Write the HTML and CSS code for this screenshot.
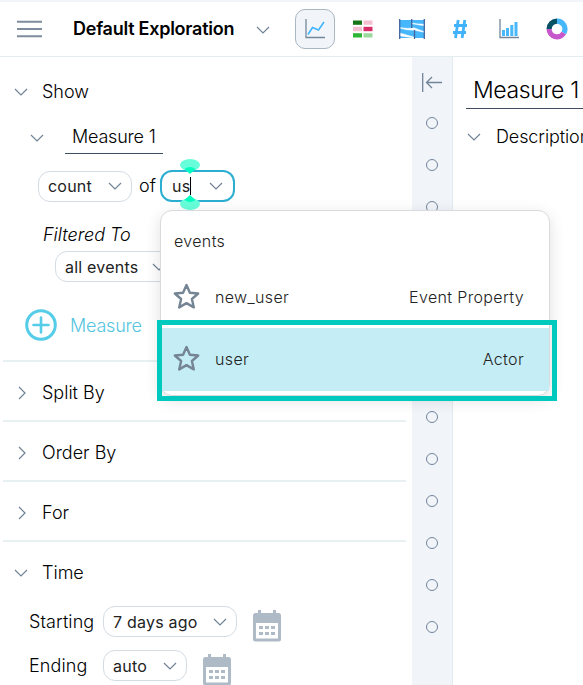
FILE: index.html
```html
<!DOCTYPE html>
<html lang="en">
<head>
<meta charset="utf-8">
<title>Default Exploration</title>
<link rel="stylesheet" href="styles.css">
</head>
<body>
<svg class="defs" aria-hidden="true">
  <symbol id="down" viewBox="0 0 14 8"><path d="M1 1l6 6 6-6" fill="none" stroke="currentColor" stroke-width="1.2"/></symbol>
  <symbol id="right" viewBox="0 0 8 14"><path d="M1 1l6 6-6 6" fill="none" stroke="currentColor" stroke-width="1.2"/></symbol>
  <symbol id="star" viewBox="0 0 28 28"><path d="M13.500 2l3.400 7.700 8.300.8-6.300 5.500 1.900 8.400-7.300-4.300-7.300 4.300 1.900-8.400-6.300-5.500 8.300-.8z" fill="none" stroke="#758594" stroke-width="2.4" stroke-linejoin="round"/></symbol>
  <symbol id="calendar" viewBox="0 0 28 32"><path d="M5 0h3v4H5zM20 0h3v4h-3z" fill="#aebbc7"/><rect y="3" width="28" height="28.500" rx="2.5" fill="#aebbc7"/><path d="M3 13h22v15.500H3z" fill="#fff"/><path d="M6 16h4v3H6zM12 16h4v3h-4zM18 16h4v3h-4zM6 22h4v3H6zM12 22h4v3h-4zM18 22h4v3h-4z" fill="#aebbc7"/></symbol>
</svg>
<header class="topbar">
  <svg class="burger" viewBox="0 0 26 18"><path d="M0 1.5h26M0 9h26M0 16.5h26" stroke="#7d8d9d" stroke-width="2"/></svg>
  <h1 class="title">Default Exploration</h1>
  <svg class="down title-down"><use href="#down"/></svg>
  <nav class="views">
    <span class="view active"><svg width="20" height="20" viewBox="0 0 20 20"><path d="M1 0v18.5h19" fill="none" stroke="#75869a" stroke-width="1.3"/><path d="M3 15.500l4.500-7 6 2.500 5.500-8" fill="none" stroke="#42b4fa" stroke-width="1.600"/></svg></span>
    <span class="view"><svg width="20" height="18" viewBox="0 0 20 18"><path d="M0 .5h9v4.300H0z" fill="#157517"/><path d="M10.500 .5h9v4.300h-9zM0 6.800h9v4.400H0z" fill="#f4c0d1"/><path d="M10.500 6.800h9v4.400h-9z" fill="#d82d68"/><path d="M0 13.200h9v4.300H0z" fill="#2eb536"/><path d="M10.500 13.200h9v4.300h-9z" fill="#9bd99f"/></svg></span>
    <span class="view"><svg width="26" height="20" viewBox="0 0 26 20"><path d="M1 1h24v18H1z" fill="#46b7fb"/><path d="M1 8.500Q8 10 15 8.800L25 12.500v.8L15 11.200Q8 11.500 1 9.300zM13 4l5 .8 7 .4v1.600L13 4.800zM1 14l14 4v1L1 17z" fill="#fff" stroke="#fff" stroke-width=".4"/><path d="M.7 0v20M25.300 0v20M12.700 0v9M15.500 11v9" stroke="#41649d" stroke-width="1.300"/></svg></span>
    <span class="view"><svg width="16" height="20" viewBox="0 0 16 20"><path d="M6.200 1L3.500 19M12.800 1l-2.700 18M2 6.500h13M1 13.500h13" stroke="#42b3fb" stroke-width="2.800" fill="none"/></svg></span>
    <span class="view"><svg width="20" height="20" viewBox="0 0 20 20"><path d="M1 0v18.500h19" fill="none" stroke="#75869a" stroke-width="1.300"/><path d="M3 11h3v6H3zM7 9h3v8H7zM11.300 6h3v11h-3zM15.500 3h3v14h-3z" fill="#48b7fb"/></svg></span>
    <span class="view"><svg width="22" height="22" viewBox="0 0 22 22"><g fill="none" stroke-width="5.200"><path d="M11 3.100A7.900 7.900 0 0 1 17.800 15" stroke="#46b7fb"/><path d="M17.800 15A7.900 7.900 0 0 1 3.100 11" stroke="#c658cc"/><path d="M3.100 11A7.900 7.900 0 0 1 11 3.100" stroke="#075264"/></g></svg></span>
  </nav>
</header>
<div class="body">
  <aside class="sidebar">
    <section class="show">
      <div class="row show-head"><svg class="down"><use href="#down"/></svg><span>Show</span></div>
      <div class="row measure-head"><svg class="down"><use href="#down"/></svg><span class="measure-name">Measure 1</span></div>
      <div class="row aggregate">
        <span class="pill count">count<svg class="down"><use href="#down"/></svg></span>
        <span class="of">of</span>
        <span class="pill entry">us<i class="caret"></i><svg class="down"><use href="#down"/></svg>
          <svg class="handle upper" viewBox="0 0 20 15"><ellipse cx="10" cy="6" rx="10" ry="6" fill="#66ffda"/><path d="M4.500 10Q10 6 15.500 10L10 15z" fill="#00ffc0"/></svg>
          <svg class="handle lower" viewBox="0 0 20 15"><ellipse cx="10" cy="9" rx="10" ry="6" fill="#66ffda"/><path d="M4.500 5Q10 9 15.500 5L10 0z" fill="#00ffc0"/></svg>
        </span>
      </div>
      <div class="row filtered">Filtered To</div>
      <div class="row filter"><span class="pill all">all events<svg class="down"><use href="#down"/></svg></span></div>
      <div class="row add"><svg width="32" height="32" viewBox="0 0 32 32"><g fill="none" stroke="#55cce8"><circle cx="16" cy="16" r="14.300" stroke-width="3"/><path d="M16 8.500v15M8.500 16h15" stroke-width="2.600" stroke-linecap="round"/></g></svg><span>Measure</span></div>
    </section>
    <section class="row fold"><svg class="right"><use href="#right"/></svg>Split By</section>
    <section class="row fold"><svg class="right"><use href="#right"/></svg>Order By</section>
    <section class="row fold"><svg class="right"><use href="#right"/></svg>For</section>
    <section class="time">
      <div class="row time-head"><svg class="down"><use href="#down"/></svg><span>Time</span></div>
      <div class="row when"><span class="when-label">Starting</span><span class="pill start">7 days ago<svg class="down"><use href="#down"/></svg></span><svg class="calendar"><use href="#calendar"/></svg></div>
      <div class="row when"><span class="when-label">Ending</span><span class="pill end">auto<svg class="down"><use href="#down"/></svg></span><svg class="calendar"><use href="#calendar"/></svg></div>
    </section>
  </aside>
  <div class="gutter">
    <svg width="20" height="20" viewBox="0 0 20 20"><path d="M.7 0v19M20 9.500H4.500M10 4L4.500 9.500 10 15" fill="none" stroke="#71849a" stroke-width="1.300"/></svg>
    <div class="dots"><i></i><i></i><i></i><i></i><i></i><i></i><i></i><i></i><i></i><i></i><i></i><i></i><i></i></div>
  </div>
  <main class="main">
    <h2 class="heading">Measure 1</h2>
    <div class="row description"><svg class="down"><use href="#down"/></svg><span>Description</span></div>
  </main>
</div>
<div class="menu">
  <div class="group">events</div>
  <div class="option"><svg class="star"><use href="#star"/></svg><span>new_user</span><span class="kind">Event Property</span></div>
  <div class="option selected"><svg class="star"><use href="#star"/></svg><span>user</span><span class="kind">Actor</span></div>
</div>
<div class="callout"></div>
</body>
</html>
```
FILE: styles.css
```css
* { box-sizing: border-box; }
body {
  position: relative;
  margin: 0;
  width: 583px;
  height: 685px;
  overflow: hidden;
  background: #fff;
  color: #000;
  font: 300 18px/30px Inter, sans-serif;
}
svg { display: block; flex: none; }
.defs { position: absolute; width: 0; height: 0; }
.down { width: 14px; height: 8px; color: #6f8296; }
.right { width: 8px; height: 14px; color: #6f8296; }
.row { display: flex; align-items: center; white-space: nowrap; }

.topbar {
  display: flex;
  align-items: center;
  height: 57px;
  padding-left: 17px;
  border-top: 2px solid #f1f5f9;
  border-bottom: 1px solid #e3edef;
}
.burger { width: 25px; height: 18px; }
.title { width: 183px; margin: 0 0 0 31px; font-size: 18px; font-weight: 600; white-space: nowrap; letter-spacing: -.25px; }
.title-down { margin-top: 2px; }
.views { display: flex; margin-left: 25px; gap: 8.400px; }
.view { display: flex; align-items: center; justify-content: center; width: 40px; height: 40px; flex: none; }
.active { background: #f1f5f9; border: 1px solid #a9b6c3; border-radius: 10px; }

.body { display: flex; height: 628px; }
.sidebar { width: 412px; padding: 0 6px 0 3px; }
.show { height: 305px; border-bottom: 2px solid #e8f0f2; padding-top: 20px; }
.show-head, .time-head { padding-left: 11px; gap: 14px; }
.measure-head { height: 33px; margin-top: 14px; padding-left: 27px; gap: 21px; letter-spacing: -.2px; }
.measure-name { width: 98px; height: 33px; padding-left: 7px; line-height: 32px; border-bottom: 1px solid #3f4d60; }
.aggregate { height: 32px; margin-top: 16px; padding-left: 35px; }
.pill {
  display: flex;
  align-items: center;
  justify-content: space-between;
  height: 31px;
  padding: 0 9px;
  border: 1px solid #d3dbe3;
  border-radius: 12px;
  background: #fff;
  color: #222;
  font-size: 16px;
  font-weight: 400;
  letter-spacing: .22px;
}
.count { width: 94px; }
.of { width: 28px; padding-left: 7px; }
.entry { position: relative; width: 75px; height: 32px; padding: 0 10px; border: 2px solid #2caed0; }
.entry > .down { margin-left: auto; }
.caret { width: 1px; height: 18px; background: #000; }
.handle { position: absolute; left: 18px; width: 20px; height: 15px; }
.upper { top: -13px; }
.lower { bottom: -10px; }
.filtered { height: 30px; margin-top: 18px; padding-left: 40px; font-style: italic; }
.filter { height: 31px; margin-top: 1px; padding-left: 52px; }
.all { width: 121px; }
.add { height: 32px; margin-top: 27px; padding-left: 22px; gap: 13px; color: #55c5e0; letter-spacing: -.2px; }
.add span { padding-top: 2px; }
.fold { height: 60px; padding: 4px 0 0 15px; gap: 16px; border-bottom: 2px solid #e8f0f2; }
.time { padding-top: 16px; }
.when { height: 31px; margin-top: 13px; padding-left: 26px; }
.time-head + .when { margin-top: 18px; }
.when-label { width: 74px; letter-spacing: .1px; }
.start { width: 134px; }
.end { width: 84px; }
.calendar { width: 28px; height: 32px; margin: 8px 0 0 16px; }

.gutter { width: 41px; padding: 16px 0 0 10px; background: #f1f5f9; border-right: 1px solid #e0ecee; }
.dots { display: flex; flex-direction: column; gap: 30px; margin: 24px 0 0 4px; }
.dots i { width: 12px; height: 12px; border: 1.300px solid #71849a; border-radius: 50%; }
.main { width: 130px; overflow: hidden; padding: 14px 0 0 13px; }
.heading { height: 38px; margin: 0; padding-left: 7px; border-bottom: 1px solid #3f4d60; font-size: 23px; font-weight: 300; line-height: 38px; letter-spacing: -.35px; white-space: nowrap; }
.description { height: 30px; margin-top: 13px; padding-left: 1px; gap: 15px; letter-spacing: -.1px; }

.menu {
  position: absolute;
  left: 160px;
  top: 210px;
  width: 390px;
  height: 186px;
  border: 1px solid #d8dadd;
  border-radius: 12px;
  background: #fff;
  box-shadow: 0 4px 16px rgba(0, 0, 0, .12);
  color: #222;
  font-size: 16px;
  letter-spacing: .35px;
}
.group { height: 55px; padding: 15px 13px 0; }
.option { display: flex; align-items: center; height: 62px; padding: 0 25px 0 12px; }
.selected { height: 63px; padding-bottom: 2px; background: #c5edf5; }
.star { width: 28px; height: 28px; margin-right: 14px; }
.kind { margin-left: auto; }
.callout { position: absolute; left: 157px; top: 320px; width: 400px; height: 81px; border: 5px solid #00c9bd; }
```
